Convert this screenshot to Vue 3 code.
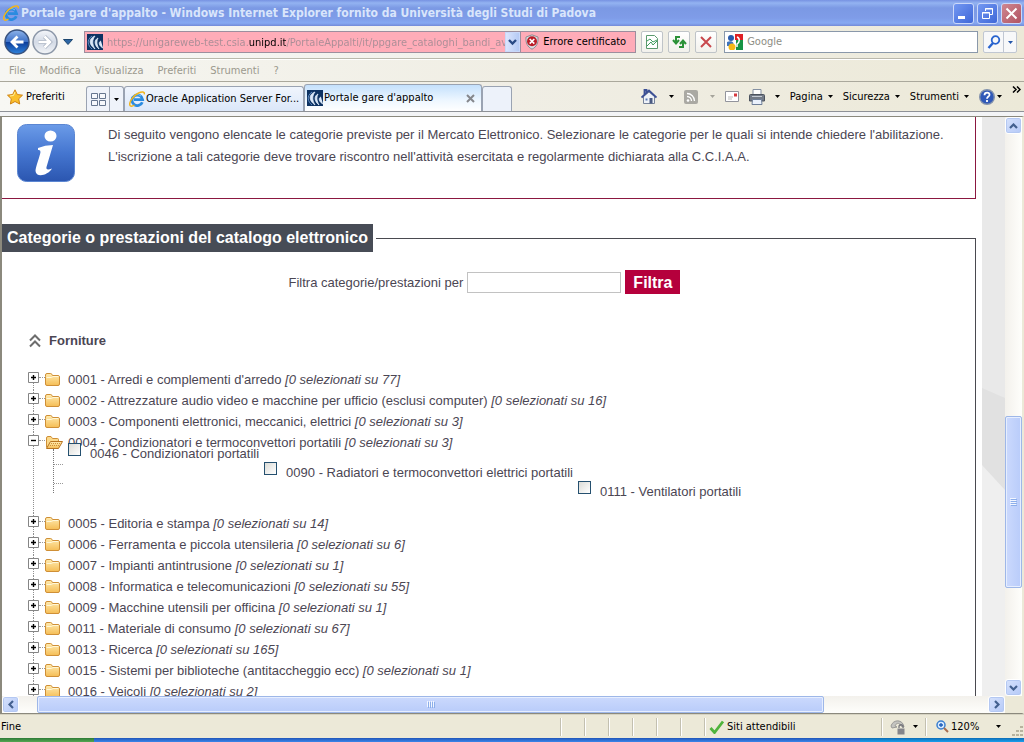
<script setup>
import { ref } from 'vue'

const address = ref('https://unigareweb-test.csia.unipd.it/PortaleAppalti/it/ppgare_cataloghi_bandi_av')
const query = ref('')
const filter = ref('')
const menus = ['File', 'Modifica', 'Visualizza', 'Preferiti', 'Strumenti', '?']
const pageMenus = ['Pagina', 'Sicurezza', 'Strumenti']
const categories = ref([
  { code: '0001', name: "Arredi e complementi d'arredo", total: 77 },
  { code: '0002', name: 'Attrezzature audio video e macchine per ufficio (esclusi computer)', total: 16 },
  { code: '0003', name: 'Componenti elettronici, meccanici, elettrici', total: 3 },
  {
    code: '0004', name: 'Condizionatori e termoconvettori portatili', total: 3, open: true,
    children: [
      { code: '0046', name: 'Condizionatori portatili' },
      { code: '0090', name: 'Radiatori e termoconvettori elettrici portatili' },
      { code: '0111', name: 'Ventilatori portatili' },
    ],
  },
  { code: '0005', name: 'Editoria e stampa', total: 14 },
  { code: '0006', name: 'Ferramenta e piccola utensileria', total: 6 },
  { code: '0007', name: 'Impianti antintrusione', total: 1 },
  { code: '0008', name: 'Informatica e telecomunicazioni', total: 55 },
  { code: '0009', name: 'Macchine utensili per officina', total: 1 },
  { code: '0011', name: 'Materiale di consumo', total: 67 },
  { code: '0013', name: 'Ricerca', total: 165 },
  { code: '0015', name: 'Sistemi per biblioteche (antitaccheggio ecc)', total: 1 },
  { code: '0016', name: 'Veicoli', total: 2 },
])
</script>

<template>
  <div class="window">
    <svg class="defs" width="0" height="0" aria-hidden="true">
      <defs>
        <linearGradient id="gBack" x1="0" y1="0" x2="0" y2="1"><stop offset="0" stop-color="#8fb4ea" /><stop offset=".48" stop-color="#3f72c8" /><stop offset=".52" stop-color="#0d3f9c" /><stop offset="1" stop-color="#2f83dc" /></linearGradient>
        <linearGradient id="gFwd" x1="0" y1="0" x2="0" y2="1"><stop offset="0" stop-color="#f4f6fa" /><stop offset=".5" stop-color="#d3dae6" /><stop offset="1" stop-color="#f3f5f8" /></linearGradient>
        <linearGradient id="gInfo" x1="0" y1="0" x2="0" y2="1"><stop offset="0" stop-color="#6b9be8" /><stop offset=".5" stop-color="#4576d0" /><stop offset="1" stop-color="#2b56b0" /></linearGradient>
        <linearGradient id="gFolder" x1="0" y1="0" x2="0" y2="1"><stop offset="0" stop-color="#ffebb0" /><stop offset="1" stop-color="#f5bd55" /></linearGradient>
        <symbol id="ie" viewBox="0 0 16 16">
          <path d="M13.300 11.200A5.300 5.300 0 1 1 13.600 8.600H5" fill="none" stroke="#2a8be0" stroke-width="2.800" />
          <path d="M3.500 7a5 4.500 0 0 1 8.500-2" fill="none" stroke="#7cc4f6" stroke-width="1" />
          <path d="M1.200 14.800C-.8 12 4 4.500 9.500 2 13 .3 16 .4 15.200 3.400M1.200 14.800C2.200 15.700 4 15 5.500 14" fill="none" stroke="#f2b51c" stroke-width="1.500" />
        </symbol>
        <symbol id="unipd" viewBox="0 0 16 16">
          <rect width="16" height="16" fill="#0d3262" />
          <path d="M8 2C2 4 1 10 8 15C5 10 5 6 8 2M11 4c-4 2-4 7 1 11-2-4-3-7-1-11M14 7c-3 1-2 5 2 7" fill="#dbe8f8" stroke="#dbe8f8" stroke-width=".8" />
          <path d="M5 2C-1 6 1 12 5 15" fill="none" stroke="#5f8cc4" stroke-width="1" />
        </symbol>
        <symbol id="folder" viewBox="0 0 15 13">
          <path d="M.5 3.500v7.500q0 1.500 1.500 1.500h11q1.500 0 1.500-1.500V4q0-1.500-1.500-1.500H7.500L6.500.8q-.3-.3-.8-.3H2Q.5.500.5 2z" fill="url(#gFolder)" stroke="#cf8f36" />
          <path d="M1.500 4.500h5l1.500-1h5.500" fill="none" stroke="#fff7d8" />
        </symbol>
        <symbol id="folder-open" viewBox="0 0 18 13">
          <path d="M1.500 11.500V2Q1.500.5 3 .5h3l1.500 2h5q1 0 1 1V6" fill="#fbd98a" stroke="#cf8f36" />
          <path d="M1.500 12.500 5.500 5.500H17.500L13.500 12.500z" fill="url(#gFolder)" stroke="#b87420" />
          <path d="M6 7.500h9.500M5 9.500h9.500" stroke="#cf8f36" stroke-dasharray="1 1" />
        </symbol>
      </defs>
    </svg>

    <header class="title">
      <svg class="i16"><use href="#ie" /></svg>
      <h1>Portale gare d'appalto - Windows Internet Explorer fornito da Università degli Studi di Padova</h1>
      <button class="win" aria-label="Riduci a icona"><svg width="19" height="19"><path d="M4 13.500h7" stroke="#fff" stroke-width="3" /></svg></button>
      <button class="win" aria-label="Ripristina"><svg width="19" height="19" fill="none" stroke="#fff"><path d="M7.500 7V4.500h7v6H12M7 5h8M4.500 8.500h7v6h-7zM4 9h8" /></svg></button>
      <button class="win close" aria-label="Chiudi"><svg width="19" height="19"><path d="m4.500 4.500 10 10m0-10-10 10" stroke="#fff" stroke-width="2" /></svg></button>
    </header>

    <div class="nav">
      <div class="history">
        <button aria-label="Indietro"><svg width="28" height="28" viewBox="0 0 28 28"><circle cx="14" cy="14" r="12" fill="url(#gBack)" stroke="#39527e" stroke-width="1.500" /><path d="M20.500 14H9m5.500-5.500L9 14l5.500 5.500" fill="none" stroke="#fff" stroke-width="2.800" /></svg></button>
        <button aria-label="Avanti"><svg width="28" height="28" viewBox="0 0 28 28"><circle cx="14" cy="14" r="12" fill="url(#gFwd)" stroke="#8c97a8" stroke-width="1.500" /><path d="M7.500 14H19m-5.500-5.500L19 14l-5.500 5.500" fill="none" stroke="#a6b0c0" stroke-width="4" /><path d="M7.500 14H19m-5.500-5.500L19 14l-5.500 5.500" fill="none" stroke="#fff" stroke-width="2.500" /></svg></button>
        <button class="recent" aria-label="Pagine recenti"><svg width="10" height="6"><path d="M.5.500h9L5 5.500z" fill="#2c65a5" stroke="#1d466f" /></svg></button>
      </div>
      <div class="address">
        <svg class="i16"><use href="#unipd" /></svg>
        <input v-model="address" class="url" aria-label="Indirizzo" spellcheck="false">
        <button class="drop" aria-label="Mostra indirizzi"><svg width="9" height="7"><path d="m1 1 3.500 3.500L8 1" fill="none" stroke="#294a85" stroke-width="2.400" /></svg></button>
        <button class="cert">
          <svg width="14" height="16" viewBox="0 0 14 16"><path d="M7 .8 13 3c.5 6-1.500 10-6 12.200C2.500 13 .5 9 1 3z" fill="#d9dce2" stroke="#8e8b90" /><circle cx="7" cy="7.300" r="5" fill="#bb1c27" /><path d="m4.700 5 4.600 4.600m0-4.600L4.700 9.600" stroke="#fff" stroke-width="1.600" /></svg>
          Errore certificato
        </button>
      </div>
      <button class="sq" aria-label="Visualizzazione compatibilità"><svg width="12" height="14" fill="none"><path d="M.5.500h8l3 3v10H.5z" stroke="#5b9a6e" fill="#fff" /><path d="m1 6 3-2 3 3 4-2M1 11l4-4 2 3 4-4" stroke="#3d9c5c" /></svg></button>
      <button class="sq" aria-label="Aggiorna"><svg width="17" height="16" fill="none" stroke="#2c9238" stroke-width="2"><path d="M9 3H5v6M2 6l3 3.500L8 6" /><path d="M8 13h4V7M9 10l3-3.500L15 10" /></svg></button>
      <button class="sq" aria-label="Interrompi"><svg width="12" height="12"><path d="m1 1 10 10M11 1 1 11" stroke="#c8484d" stroke-width="2" /></svg></button>
      <div class="search">
        <svg class="i16" viewBox="0 0 16 16"><rect width="16" height="16" fill="#fff" /><path d="M8 0h8v6H8z" fill="#df2025" /><path d="M9 6h7v10H9z" fill="#169444" /><circle cx="4" cy="4" r="3" fill="#295bad" /><path d="M0 8c4-2 8 0 6 4H0z" fill="#4075bd" /><circle cx="5" cy="13" r="3.500" fill="#f4b817" /><path d="M10 3c3 1 3 5 0 7v3" fill="none" stroke="#fff" stroke-width="1.500" /></svg>
        <input v-model="query" placeholder="Google" aria-label="Cerca con Google">
      </div>
      <div class="go">
        <button aria-label="Cerca"><svg width="14" height="14" fill="none" stroke="#2863ce"><circle cx="8.500" cy="5" r="3.800" stroke-width="1.800" /><path d="m6 8-4.500 5" stroke-width="2.400" /></svg></button>
        <button aria-label="Opzioni di ricerca"><svg width="5" height="3"><path d="M0 0h5L2.500 3z" fill="#2355a8" /></svg></button>
      </div>
    </div>

    <nav class="menu"><button v-for="m in menus" :key="m">{{ m }}</button></nav>

    <div class="tabs">
      <button class="fav"><svg class="i16" viewBox="0 0 16 16"><path d="m8 .8 2.300 4.700 5.200.7-3.800 3.600 1 5.200L8 12.500 3.400 15l.9-5.200L.5 6.200l5.200-.7z" fill="#fbc02c" stroke="#d08414" /><path d="m8 3-1.500 3.500L3 7" fill="none" stroke="#fff0a0" /></svg>Preferiti</button>
      <div class="quick">
        <button aria-label="Schede rapide"><svg width="15" height="13" fill="#f6f8fc" stroke="#66768f"><path d="M.5.500h6v5h-6zM8.500.500h6v5h-6zM.5 7.500h6v5h-6zM8.500 7.500h6v5h-6z" /></svg></button>
        <button aria-label="Elenco schede"><svg width="5" height="3"><path d="M0 0h5L2.500 3z" /></svg></button>
      </div>
      <button class="tab"><svg class="i16"><use href="#ie" /></svg>Oracle Application Server For...</button>
      <div class="tab active">
        <svg class="i16"><use href="#unipd" /></svg><span>Portale gare d'appalto</span>
        <button aria-label="Chiudi scheda"><svg width="9" height="9"><path d="m1 1 7 7m0-7L1 8" stroke="#85878c" stroke-width="2" /></svg></button>
      </div>
      <button class="new" aria-label="Nuova scheda"></button>
      <div class="tools">
        <button class="t-home" aria-label="Home"><svg class="i16" viewBox="0 0 16 16"><path d="M2.500 7.500v7h11v-7L8 3z" fill="#eef2f8" stroke="#77839a" /><path d="M.5 8.500 8 1.500l7.500 7M3.500 5V1h2v2" fill="none" stroke="#3b4f95" stroke-width="1.800" /><path d="M8.500 9h3v5.500h-3z" fill="#4b5b82" /><path d="M4.500 9.500h2v2h-2z" fill="#5878b8" /></svg><svg class="caret"><path d="M0 0h5L2.500 3z" /></svg></button>
        <button class="t-rss" aria-label="Feed"><svg width="14" height="14"><rect width="14" height="14" rx="2" fill="#aaa9a3" /><circle cx="4" cy="10.500" r="1.300" fill="#fff" /><path d="M3 6.500a4.500 4.500 0 0 1 4.500 4.500M3 3.500a7.500 7.500 0 0 1 7.500 7.500" fill="none" stroke="#fff" stroke-width="1.300" /></svg><svg class="caret dim"><path d="M0 0h5L2.500 3z" /></svg></button>
        <button aria-label="Posta"><svg width="14" height="11"><path d="M.5.500h13v10H.5z" fill="#fff" stroke="#92949c" /><path d="M3 6h5M3 8h4" stroke="#bbb" /><path d="M9 2.500h3v3H9z" fill="#d6393f" /></svg></button>
        <button class="t-print" aria-label="Stampa"><svg class="i16" viewBox="0 0 16 16"><path d="M4 .5h8V6H4z" fill="#fff" stroke="#8490a2" /><path d="M1.500 5.500h13q1 0 1 1V12H.5V6.500q0-1 1-1z" fill="#737b87" stroke="#4c535e" /><path d="M3 7.500h10" stroke="#c6ccd5" /><path d="M3.500 10.500h9l.5 5H3z" fill="#eaf1fc" stroke="#6f7f98" /></svg><svg class="caret"><path d="M0 0h5L2.500 3z" /></svg></button>
        <button v-for="m in pageMenus" :key="m" class="word">{{ m }}<svg class="caret"><path d="M0 0h5L2.500 3z" /></svg></button>
        <button class="help" aria-label="Guida"><svg class="i16" viewBox="0 0 16 16"><circle cx="8" cy="8" r="7.300" fill="#3059b8" stroke="#8392ac" stroke-width="1.400" /><path d="M5.500 6.200C5.500 2.800 11 3 10.500 6 10.300 7.500 8 7.800 8 9.800M8 11v2" fill="none" stroke="#fff" stroke-width="1.800" /></svg><svg class="caret"><path d="M0 0h5L2.500 3z" /></svg></button>
        <button class="more" aria-label="Altri comandi"><svg width="9" height="7" fill="none" stroke="#000" stroke-width="1.500"><path d="m1 .5 3 3-3 3m4-6 3 3-3 3" /></svg></button>
      </div>
    </div>

    <div class="frame">
      <div class="view">
        <main class="page">
          <section class="info">
            <svg width="58" height="58" viewBox="0 0 58 58"><rect x=".5" y=".5" width="57" height="57" rx="9" fill="url(#gInfo)" stroke="#5b86d2" /><ellipse cx="33.500" cy="12" rx="6" ry="5.500" fill="#fff" /><path d="M21 24Q28 21 36 21L29.500 43Q28.500 47 35 44.500C31 51.500 19 54 18.500 47 18.500 43 23 32 23.500 28Q23.500 25.500 21 26z" fill="#fff" /></svg>
            <p>Di seguito vengono elencate le categorie previste per il Mercato Elettronico. Selezionare le categorie per le quali si intende chiedere l'abilitazione. L'iscrizione a tali categorie deve trovare riscontro nell'attività esercitata e regolarmente dichiarata alla C.C.I.A.A.</p>
          </section>
          <fieldset>
            <legend><span>Categorie o prestazioni del catalogo elettronico</span></legend>
            <form class="filter" @submit.prevent>
              <label for="filtro">Filtra categorie/prestazioni per</label>
              <input id="filtro" v-model="filter">
              <button>Filtra</button>
            </form>
            <h2><svg width="12" height="14" fill="none" stroke="#6d6d6d" stroke-width="2"><path d="m1 6.500 5-5 5 5M1 12.500l5-5 5 5" /></svg>Forniture</h2>
            <ul class="tree">
              <li v-for="c in categories" :key="c.code" :class="{ open: c.open }">
                <div class="row">
                  <button class="toggle" :aria-label="c.open ? 'Comprimi' : 'Espandi'" @click="c.open = !c.open">
                    <svg width="11" height="11"><path d="M.5.500h10v10H.5z" fill="#fff" stroke="#858585" /><path :d="c.open ? 'M3 5.500h5' : 'M3 5.500h5M5.500 3v5'" stroke="#000" stroke-width="1.400" /></svg>
                  </button>
                  <i class="dots"></i>
                  <svg v-if="c.open" class="folder wide"><use href="#folder-open" /></svg>
                  <svg v-else class="folder"><use href="#folder" /></svg>
                  <span>{{ c.code }} - {{ c.name }} <em>[0 selezionati su {{ c.total }}]</em></span>
                </div>
                <ul v-if="c.open && c.children" class="leaves">
                  <li v-for="k in c.children" :key="k.code"><label><input type="checkbox"><span>{{ k.code }} - {{ k.name }}</span></label></li>
                </ul>
              </li>
            </ul>
          </fieldset>
        </main>
        <div class="backdrop"><svg viewBox="0 0 24 579" preserveAspectRatio="none"><path d="M0 0h24v579H0z" fill="#efefef" /><path d="M0 0h24v340L0 315z" fill="#e9e9e9" /><path d="M0 271 24 281v92L0 348z" fill="#e1e1e1" /></svg></div>
      </div>
      <div class="vbar">
        <button class="sb" aria-label="Scorri su"><svg width="9" height="6"><path d="m1 5 3.500-3.500L8 5" /></svg></button>
        <div class="vtrack"><div class="vthumb"><svg width="7" height="8"><path d="M0 .5h6M0 2.500h6M0 4.500h6M0 6.500h6" stroke="#f2f6ff" /><path d="M1 1.500h6M1 3.500h6M1 5.500h6M1 7.500h6" stroke="#8caeea" /></svg></div></div>
        <button class="sb" aria-label="Scorri giù"><svg width="9" height="6"><path d="M1 1l3.500 3.500L8 1" /></svg></button>
      </div>
      <div class="hbar">
        <button class="sb" aria-label="Scorri a sinistra"><svg width="6" height="9"><path d="M5 1 1.500 4.500 5 8" /></svg></button>
        <div class="htrack"><div class="hthumb"><svg width="8" height="7"><path d="M.5 0v6M2.500 0v6M4.500 0v6M6.500 0v6" stroke="#f2f6ff" /><path d="M1.500 1v6M3.500 1v6M5.500 1v6M7.500 1v6" stroke="#8caeea" /></svg></div></div>
        <button class="sb" aria-label="Scorri a destra"><svg width="6" height="9"><path d="m1 1 3.500 3.500L1 8" /></svg></button>
      </div>
      <div class="corner"></div>
    </div>

    <footer class="status">
      <span class="done">Fine</span>
      <i v-for="n in 6" :key="n" class="cell"></i>
      <span class="zone"><svg width="16" height="14"><path d="m1.500 8 4 4.500L14 1.500" fill="none" stroke="#4fb43c" stroke-width="2.800" /></svg>Siti attendibili</span>
      <button class="protect" aria-label="Modalità protetta"><svg class="i16" viewBox="0 0 16 16"><path d="M1 7C3 0 13 0 14 8l-3-1C9 3 6 4 5 7l2 1-5 1z" fill="#c4c4c0" stroke="#9a9a96" /><path d="M7.500 9.500h7v6h-7z" fill="#85858a" /><path d="M9 9V7q2-2.500 4 0v2" fill="none" stroke="#77777c" stroke-width="1.300" /></svg><svg class="caret"><path d="M0 0h5L2.500 3z" /></svg></button>
      <button class="zoom"><svg width="13" height="13"><circle cx="5" cy="5" r="4" fill="#d9ebff" stroke="#3b7fd0" stroke-width="1.500" /><path d="M3 5h4M5 3v4" stroke="#1c5cb8" stroke-width="1.300" /><path d="m8 8 4 4" stroke="#a86c4f" stroke-width="2" /></svg>120%<svg class="caret"><path d="M0 0h5L2.500 3z" /></svg></button>
      <svg width="12" height="12" class="grip"><path d="M8 1h3M4 5h3M8 5h3M0 9h3M4 9h3M8 9h3" stroke="#b7b39e" stroke-width="2" /></svg>
    </footer>
    <div class="taskbar"><i class="start"></i><i class="tray"></i></div>
  </div>
</template>

<style>
body { margin: 0; overflow: hidden; }
</style>

<style scoped>
* { box-sizing: border-box; }
button { font: inherit; color: inherit; background: none; border: 0; padding: 0; margin: 0; display: flex; align-items: center; justify-content: center; flex: none; }
input { font: inherit; border-radius: 0; outline: 0; }
svg { display: block; flex: none; }
ul { list-style: none; margin: 0; padding: 0; }
.defs { position: absolute; }
.i16 { width: 16px; height: 16px; }
.caret { width: 5px; height: 3px; }
.dim { opacity: .3; }
.window { display: flex; flex-direction: column; height: 100vh; overflow: hidden; background: #ece9d8; font: 11px/16px "DejaVu Sans Condensed", "DejaVu Sans", sans-serif; color: #000; }

.title { flex: none; height: 26px; display: flex; align-items: center; gap: 2px; padding: 0 2px 0 3px; background: linear-gradient(#7792e2, #93b3f1 3px, #7b99e4 8px, #7f9ce8 18px, #86a9f2 23px, #738ad8); }
.title h1 { flex: 1; min-width: 0; margin: 0; font: bold 12px/18px "DejaVu Sans Condensed", sans-serif; color: #d9e5fb; white-space: nowrap; overflow: hidden; }
.win { width: 21px; height: 21px; margin-left: 1px; border: 1px solid #cbd8fa; border-radius: 3px; background: linear-gradient(135deg, #7398f2, #3f67d8); }
.win.close { background: linear-gradient(135deg, #cf8791, #b15362); }

.nav { flex: none; height: 33px; display: flex; align-items: center; gap: 5px; padding: 0 7px 0 3px; background: linear-gradient(90deg, #f8f8f7, #f1f0ea 50%, #ece9d8); border-bottom: 1px solid #bab8ac; }
.history { display: flex; align-items: center; width: 76px; }
.recent { margin-left: 4px; }
.address { flex: 553; min-width: 0; display: flex; align-items: center; height: 22px; border: 1px solid #9c8e9e; background: #ffacb8; padding-left: 2px; }
.url { flex: 1; min-width: 0; height: 20px; padding: 0 0 0 4px; border: 0; color: transparent; caret-color: #000; background: linear-gradient(90deg, #a98d96 145px, #000 145px 183px, #a98d96 183px); background-clip: text; -webkit-background-clip: text; }
.drop { width: 15px; height: 20px; background: linear-gradient(90deg, #dbe5fd, #b5caf5); border: 1px solid #c9d8fa; }
.cert { width: 115px; height: 20px; border-left: 1px solid #9c8e9e; gap: 4px; justify-content: flex-start; padding-left: 4px; }
.sq { width: 22px; height: 22px; border: 1px solid #bfc4c8; border-radius: 2px; background: linear-gradient(#fff, #f2f1ec); }
.search { flex: 252; min-width: 0; margin-left: 2px; height: 22px; display: flex; align-items: center; background: #fff; border: 1px solid #8a98aa; padding-left: 2px; }
.search input { flex: 1; min-width: 0; border: 0; padding: 0 4px; background: none; }
.search input::placeholder { color: #8d8d84; opacity: 1; }
.go { display: flex; height: 22px; border: 1px solid #c0c7d2; border-radius: 2px; background: #f7f8f9; }
.go button:first-child { width: 20px; border-right: 1px solid #c0c7d2; }
.go button:last-child { width: 12px; }

.menu { flex: none; height: 23px; display: flex; align-items: center; gap: 14px; padding-left: 9px; color: #9b998e; background: linear-gradient(90deg, #f6f6f2, #f0eee4 50%, #ece9d8); border-top: 1px solid #fff; border-bottom: 1px solid #aaa89c; }

.tabs { flex: none; height: 30px; display: flex; align-items: flex-end; background: linear-gradient(90deg, #f8f8f4, #f0eee5 50%, #ece9d8); border-bottom: 1px solid #8e9197; }
.fav { width: 86px; height: 29px; padding-left: 7px; gap: 3px; justify-content: flex-start; }
.quick { display: flex; height: 25px; border: 1px solid #9aa3b2; border-bottom: 0; border-radius: 3px 3px 0 0; background: #eff3fa; }
.quick button:first-child { width: 23px; border-right: 1px solid #9aa3b2; }
.quick button:last-child { width: 13px; }
.tab { flex: 0 1 180px; min-width: 0; height: 25px; padding: 0 4px; display: flex; align-items: center; justify-content: flex-start; gap: 1px; white-space: nowrap; border: 1px solid #9aa3b2; border-bottom: 0; border-radius: 3px 3px 0 0; background: linear-gradient(#f0f5fd, #dbe7f9); }
.tab.active { flex-basis: 178px; height: 27px; padding: 0 6px 0 2px; background: linear-gradient(#c4e0fc, #eef7ff 60%, #fff); }
.tab.active span { flex: 1; }
.new { width: 30px; height: 25px; border: 1px solid #9aa3b2; border-bottom: 0; border-radius: 3px 3px 0 0; background: #edf2fa; }
.tools { flex: 1; height: 29px; display: flex; align-items: center; justify-content: flex-end; gap: 10px; padding-right: 3px; white-space: nowrap; }
.tools button { gap: 5px; }
.tools .t-home, .tools .t-rss { gap: 12px; }
.tools .t-print { gap: 10px; }
.tools .help { gap: 2px; }
.tools .more { align-self: flex-start; margin-top: 4px; }

.frame { flex: 1; min-height: 0; display: grid; grid-template-columns: 1fr 17px; grid-template-rows: 1fr 17px; margin-top: 4px; border: solid #8b897d; border-width: 1px 2px 1px 2px; border-right-color: #ece9d8; box-shadow: 0 -4px #f3f4f6; }
.view { display: flex; min-width: 0; min-height: 0; overflow: hidden; background: #fff; }
.page { flex: 1; min-width: 0; padding-right: 6px; font: 13px/21px "Liberation Sans", Arial, sans-serif; color: #4b4653; }
.backdrop { width: 23px; flex: none; }
.backdrop svg { width: 100%; height: 100%; }
.info { height: 82px; display: flex; gap: 33px; padding: 7px 24px 0 15px; border: solid #8b1740; border-width: 0 1px 1px 0; }
.info p { margin: 0; line-height: 22px; }
fieldset { min-width: 0; margin: 25px 0 0; padding: 0; border: solid #4a4a50; border-width: 1px 1px 0 0; }
legend { padding: 0 3px 0 0; }
legend span { display: block; padding: 0 5px; background: #474c56; color: #fff; font-weight: bold; font-size: 16px; line-height: 28px; }
.filter { display: flex; justify-content: center; align-items: center; gap: 4px; padding: 18px 8px 0 0; }
.filter input { width: 154px; height: 21px; border: 1px solid #c2c2c2; background: #fff; }
.filter button { height: 24px; padding: 0 8px; background: #b5003c; color: #fff; font-weight: bold; font-size: 16px; }
h2 { margin: 36px 0 0 27px; display: flex; align-items: center; gap: 8px; font-size: 13px; line-height: 22px; }
.tree { margin: 17px 0 0 26px; }
.tree > li { position: relative; }
.tree > li::before { content: ""; position: absolute; left: 5px; top: 0; bottom: 0; border-left: 1px dotted #8f8f8f; }
.tree > li:first-child::before { top: 8px; }
.row { position: relative; height: 21px; display: flex; align-items: center; white-space: nowrap; }
.toggle { width: 11px; height: 11px; margin-bottom: 4px; }
.dots { width: 6px; margin-bottom: 4px; border-top: 1px dotted #999; }
.folder { width: 15px; height: 13px; margin-right: 8px; }
.folder.wide { width: 18px; margin-right: 5px; }
.leaves { position: relative; height: 60px; display: flex; gap: 5px; padding-left: 40px; }
.leaves::before { content: ""; position: absolute; left: 25px; top: -4px; height: 44px; width: 10px; border-left: 1px dotted #777; background: repeating-linear-gradient(90deg, #999 0 1px, transparent 1px 2px) 0 15px / 10px 1px no-repeat, repeating-linear-gradient(90deg, #999 0 1px, transparent 1px 2px) 0 34px / 10px 1px no-repeat; }
.leaves li { margin-top: -10px; }
.leaves li:nth-child(2) { margin-top: 9px; }
.leaves li:nth-child(3) { margin-top: 28px; }
.leaves label { display: flex; align-items: flex-start; gap: 9px; white-space: nowrap; }
.leaves input { appearance: none; flex: none; width: 13px; height: 13px; margin: 0; border: 1px solid #25506f; background: linear-gradient(135deg, #dcdcd7, #fff); }
.leaves input:checked { background: #2c65a5; }

.sb { width: 17px; height: 17px; border: 1px solid #fff; border-radius: 3px; background: linear-gradient(135deg, #d6e2fd, #b5c9f7); box-shadow: inset 0 0 0 1px #b4c8f2; }
.sb svg { fill: none; stroke: #43608f; stroke-width: 2.2; }
.vbar { display: flex; flex-direction: column; background: linear-gradient(90deg, #f3f1ec, #fefefb); }
.vtrack { flex: 1; display: grid; grid-template-rows: 282fr 172fr 91fr; }
.vthumb { grid-row: 2; display: flex; align-items: center; justify-content: center; border: 1px solid #9eb7e8; border-radius: 2px; background: linear-gradient(90deg, #cbd9fd, #b9ccfa); box-shadow: inset 0 0 0 1px #e6eeff; }
.hbar { display: flex; background: linear-gradient(#f3f1ec, #fefefb); min-width: 0; }
.htrack { flex: 1; display: grid; grid-template-columns: 18fr 787fr 164fr; }
.hthumb { grid-column: 2; display: flex; align-items: center; justify-content: center; border: 1px solid #9eb7e8; border-radius: 2px; background: linear-gradient(#cbd9fd, #b9ccfa); box-shadow: inset 0 0 0 1px #e6eeff; }
.corner { background: #ece9d8; }

.status { flex: none; height: 24px; display: flex; align-items: center; border-top: 1px solid #d6d3c2; background: #ece9d8; }
.done { flex: 1; padding-left: 1px; }
.cell { width: 24px; height: 18px; border-left: 1px solid #c3c0b0; box-shadow: inset 1px 0 #fff; }
.zone { width: 177px; height: 18px; display: flex; align-items: center; gap: 2px; padding-left: 4px; border-left: 1px solid #c3c0b0; box-shadow: inset 1px 0 #fff; }
.protect { width: 44px; height: 18px; gap: 7px; border-left: 1px solid #c3c0b0; box-shadow: inset 1px 0 #fff; }
.zoom { width: 87px; height: 18px; gap: 2px; padding: 0 11px 0 10px; justify-content: flex-start; border-left: 1px solid #c3c0b0; box-shadow: inset 1px 0 #fff; }
.zoom .caret { margin-left: auto; }
.grip { align-self: flex-end; }
.taskbar { flex: none; height: 4px; display: flex; justify-content: space-between; background: linear-gradient(#2055b8, #3b86ea); }
.start { width: 94px; background: linear-gradient(#2d7a35, #55a752); }
.tray { width: 164px; background: linear-gradient(#0d6cb5, #1ba0ee); }
</style>
